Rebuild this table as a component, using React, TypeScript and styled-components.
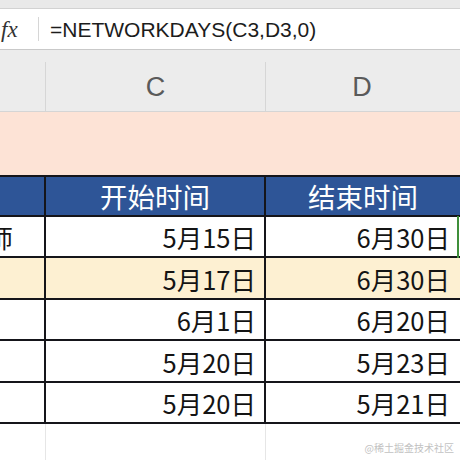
import React from "react";
import styled, { createGlobalStyle } from "styled-components";

const Global = createGlobalStyle`
  html, body { margin: 0; padding: 0; background: #fff; }
  body { width: 460px; height: 460px; overflow: hidden; }
  #root { width: 460px; height: 460px; overflow: hidden; }
`;

const Page = styled.div`
  position: relative;
  width: 460px;
  height: 460px;
  overflow: hidden;
  display: flex;
  flex-direction: column;
  font-family: "Liberation Sans", Arial, sans-serif;
`;

const TopStrip = styled.div`
  height: 8px;
  background: #e9e9e9;
  border-bottom: 1px solid #d2d2d2;
  flex: none;
`;

const FormulaBar = styled.div`
  height: 40px;
  background: #fff;
  border-bottom: 1px solid #c9c9c9;
  display: flex;
  align-items: center;
  flex: none;
`;

const Fx = styled.div`
  width: 37px;
  padding-left: 1px;
  font-family: "Liberation Serif", "Times New Roman", serif;
  font-style: italic;
  font-size: 23px;
  color: #333;
  line-height: 1;
`;

const Divider = styled.div`
  width: 1px;
  height: 24px;
  background: #d6d6d6;
  flex: none;
`;

const Formula = styled.div`
  padding-left: 11px;
  font-size: 21px;
  color: #1c1c1c;
  line-height: 1;
  padding-top: 1px;
`;

const ColHeaderRow = styled.div`
  height: 61px;
  background: #ececec;
  border-bottom: 1px solid #d5d5d5;
  display: grid;
  grid-template-columns: 46px 220px 1fr;
  flex: none;
`;

const ColHeader = styled.div<{ $last?: boolean }>`
  border-right: ${(p) => (p.$last ? "none" : "1px solid #d6d6d6")};
  display: flex;
  align-items: center;
  justify-content: center;
  font-size: 27px;
  color: #5a5a5a;
  margin-top: 12px;
  padding-top: 2px;
  padding-right: ${(p) => (p.$last ? "2px" : "0")};
`;

const TitleRow = styled.div`
  height: 63px;
  background: #fde3d6;
  flex: none;
`;

const Table = styled.div`
  display: flex;
  flex-direction: column;
  border-top: 2px solid #15151a;
  flex: none;
`;

const Row = styled.div<{ $bg: string; $h: number }>`
  display: grid;
  grid-template-columns: 46px 220px 1fr;
  height: ${(p) => p.$h}px;
  box-sizing: border-box;
  border-bottom: 2px solid #15151a;
  background: ${(p) => p.$bg};
  position: relative;
`;

const Cell = styled.div<{ $align: "center" | "right"; $head?: boolean; $edge?: boolean }>`
  box-sizing: border-box;
  border-right: ${(p) => (p.$edge ? "none" : "2px solid #15151a")};
  display: flex;
  align-items: center;
  justify-content: ${(p) => (p.$align === "right" ? "flex-end" : "center")};
  padding-right: ${(p) => (p.$align === "right" ? "8px" : "0")};
  font-family: "Noto Sans CJK SC", "Liberation Sans", sans-serif;
  font-size: ${(p) => (p.$head ? "27.5px" : "25.5px")};
  color: ${(p) => (p.$head ? "#ffffff" : "#141414")};
  white-space: nowrap;
  line-height: 1;
  padding-top: 1px;
`;

const CellD = styled(Cell)`
  padding-right: 8px;
  border-right: none;
  width: 192px;
`;

const LeftCell = styled.div`
  box-sizing: border-box;
  border-right: 2px solid #15151a;
  display: flex;
  align-items: center;
  justify-content: flex-end;
  padding-right: 31px;
  font-family: "Noto Sans CJK SC", sans-serif;
  font-size: 25.5px;
  color: #141414;
  white-space: nowrap;
  line-height: 1;
`;

const Selection = styled.div`
  position: absolute;
  left: 457px;
  top: -1px;
  bottom: -2px;
  width: 2px;
  background: #3f8f3a;
`;

const Blank = styled.div`
  flex: 1;
  display: grid;
  grid-template-columns: 46px 220px 1fr;
`;

const BlankCol = styled.div`
  border-right: 1px solid #e6e6e6;
`;

const Watermark = styled.div`
  position: absolute;
  right: 6px;
  bottom: 7px;
  font-family: "Noto Sans CJK SC", sans-serif;
  font-size: 10px;
  color: #c2c2c2;
  line-height: 1;
`;

type R = { b: string; c: string; d: string; bg: string; h: number; sel?: boolean };

const rows: R[] = [
  { b: "讲师", c: "5月15日", d: "6月30日", bg: "#ffffff", h: 41, sel: true },
  { b: "", c: "5月17日", d: "6月30日", bg: "#fdf0d2", h: 42 },
  { b: "", c: "6月1日", d: "6月20日", bg: "#ffffff", h: 41 },
  { b: "", c: "5月20日", d: "5月23日", bg: "#ffffff", h: 42 },
  { b: "", c: "5月20日", d: "5月21日", bg: "#ffffff", h: 41 },
];

export default function App() {
  return (
    <Page>
      <Global />
      <TopStrip />
      <FormulaBar>
        <Fx>fx</Fx>
        <Divider />
        <Formula>=NETWORKDAYS(C3,D3,0)</Formula>
      </FormulaBar>
      <ColHeaderRow>
        <ColHeader />
        <ColHeader>C</ColHeader>
        <ColHeader $last>D</ColHeader>
      </ColHeaderRow>
      <TitleRow />
      <Table>
        <Row $bg="#2e5597" $h={40}>
          <Cell $align="center" $head />
          <Cell $align="center" $head>开始时间</Cell>
          <Cell $align="center" $head $edge>结束时间</Cell>
        </Row>
        {rows.map((r, i) => (
          <Row key={i} $bg={r.bg} $h={r.h}>
            <LeftCell>{r.b}</LeftCell>
            <Cell $align="right">{r.c}</Cell>
            <CellD $align="right">{r.d}</CellD>
            {r.sel && <Selection />}
          </Row>
        ))}
      </Table>
      <Blank>
        <BlankCol />
        <BlankCol />
        <div />
      </Blank>
      <Watermark>@稀土掘金技术社区</Watermark>
    </Page>
  );
}
